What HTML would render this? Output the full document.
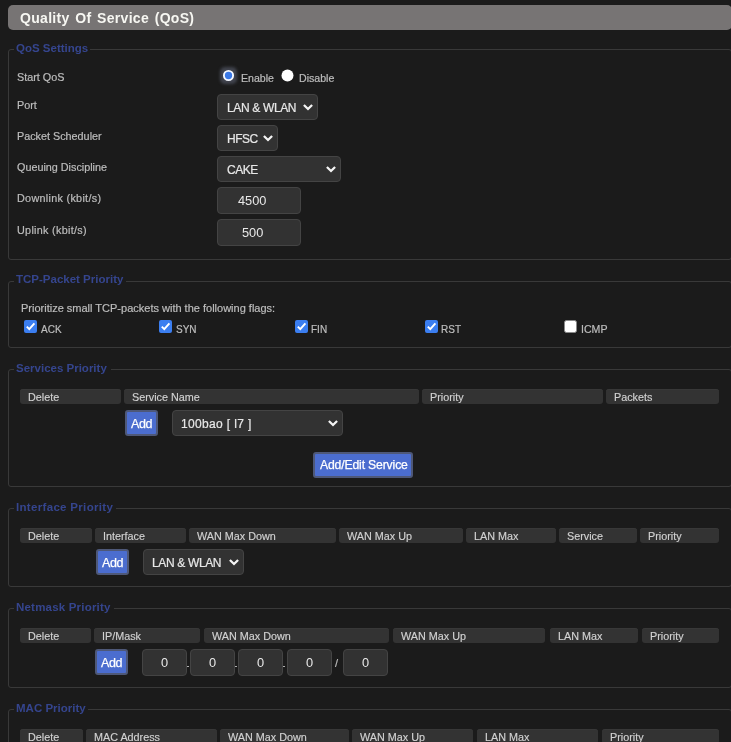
<!DOCTYPE html>
<html><head><meta charset="utf-8"><title>QoS</title>
<style>
html,body{margin:0;padding:0;}
body{background:#1b1b1b;width:731px;height:742px;overflow:hidden;position:relative;font-family:"Liberation Sans", sans-serif;}
.t{position:absolute;white-space:nowrap;will-change:transform;}
.r{position:absolute;}
</style></head><body>
<div class="r" style="left:8px;top:5px;width:724px;height:25px;background:#777474;border-radius:5px;"></div>
<div class="t" style="left:20.20px;top:11.35px;font-size:14px;line-height:14px;font-weight:bold;color:#f7f7f2;letter-spacing:0.3px;word-spacing:1.5px;">Quality Of Service (QoS)</div>
<div class="r" style="left:8px;top:49px;width:724px;height:211px;background:transparent;border:1px solid #393939;box-sizing:border-box;border-radius:3px;"></div>
<div class="r" style="left:14px;top:48px;width:76px;height:3px;background:#1b1b1b;border-radius:0px;"></div>
<div class="t" style="left:16.40px;top:43.27px;font-size:11.5px;line-height:11.5px;font-weight:bold;color:#35458e;letter-spacing:0px;">QoS Settings</div>
<div class="t" style="left:17.30px;top:71.86px;font-size:10.8px;line-height:10.8px;font-weight:normal;color:#bdbdbd;-webkit-text-stroke:0.2px #bdbdbd;">Start QoS</div>
<div class="t" style="left:17.30px;top:99.86px;font-size:10.8px;line-height:10.8px;font-weight:normal;color:#bdbdbd;-webkit-text-stroke:0.2px #bdbdbd;">Port</div>
<div class="t" style="left:17.30px;top:130.86px;font-size:10.8px;line-height:10.8px;font-weight:normal;color:#bdbdbd;-webkit-text-stroke:0.2px #bdbdbd;">Packet Scheduler</div>
<div class="t" style="left:17.30px;top:161.86px;font-size:10.8px;line-height:10.8px;font-weight:normal;color:#bdbdbd;-webkit-text-stroke:0.2px #bdbdbd;">Queuing Discipline</div>
<div class="t" style="left:17.30px;top:192.86px;font-size:10.8px;line-height:10.8px;font-weight:normal;color:#bdbdbd;letter-spacing:0.3px;-webkit-text-stroke:0.2px #bdbdbd;">Downlink (kbit/s)</div>
<div class="t" style="left:17.30px;top:224.86px;font-size:10.8px;line-height:10.8px;font-weight:normal;color:#bdbdbd;letter-spacing:0.3px;-webkit-text-stroke:0.2px #bdbdbd;">Uplink (kbit/s)</div>
<div class="r" style="left:220px;top:67px;width:17px;height:17px;border-radius:5px;background:rgba(110,118,140,0.45);filter:blur(1.5px);"></div>
<svg class="r" style="left:222px;top:69px" width="13" height="13" viewBox="0 0 13 13"><circle cx="6.5" cy="6.5" r="4.6" fill="#3a78e6" stroke="#f4f8ff" stroke-width="1.9"/></svg>
<div class="t" style="left:240.60px;top:72.83px;font-size:10.6px;line-height:10.6px;font-weight:normal;color:#bdbdbd;-webkit-text-stroke:0.2px #bdbdbd;">Enable</div>
<svg class="r" style="left:281px;top:69px" width="13" height="13" viewBox="0 0 13 13"><circle cx="6.5" cy="6.5" r="6" fill="#ffffff"/></svg>
<div class="t" style="left:299.00px;top:72.83px;font-size:10.6px;line-height:10.6px;font-weight:normal;color:#bdbdbd;-webkit-text-stroke:0.2px #bdbdbd;">Disable</div>
<div class="r" style="left:217px;top:94px;width:101px;height:26px;background:#323232;border:1px solid #444444;box-sizing:border-box;border-radius:4px;"></div>
<div class="t" style="left:226.70px;top:101.74px;font-size:12px;line-height:12px;font-weight:normal;color:#e8e8e8;letter-spacing:-0.35px;-webkit-text-stroke:0.2px #e8e8e8;">LAN &amp; WLAN</div>
<svg class="r" style="left:302px;top:103.2px" width="12" height="8" viewBox="0 0 12 8"><path d="M1.9 2 L6 6 L10.1 2" fill="none" stroke="#f4f4f4" stroke-width="2.3" stroke-linecap="butt"/></svg>
<div class="r" style="left:217px;top:125px;width:61px;height:26px;background:#323232;border:1px solid #444444;box-sizing:border-box;border-radius:4px;"></div>
<div class="t" style="left:226.70px;top:132.84px;font-size:12px;line-height:12px;font-weight:normal;color:#e8e8e8;letter-spacing:-0.5px;-webkit-text-stroke:0.2px #e8e8e8;">HFSC</div>
<svg class="r" style="left:262px;top:134.2px" width="12" height="8" viewBox="0 0 12 8"><path d="M1.9 2 L6 6 L10.1 2" fill="none" stroke="#f4f4f4" stroke-width="2.3" stroke-linecap="butt"/></svg>
<div class="r" style="left:217px;top:156px;width:124px;height:26px;background:#323232;border:1px solid #444444;box-sizing:border-box;border-radius:4px;"></div>
<div class="t" style="left:226.70px;top:163.84px;font-size:12px;line-height:12px;font-weight:normal;color:#e8e8e8;letter-spacing:-0.5px;-webkit-text-stroke:0.2px #e8e8e8;">CAKE</div>
<svg class="r" style="left:325px;top:165.2px" width="12" height="8" viewBox="0 0 12 8"><path d="M1.9 2 L6 6 L10.1 2" fill="none" stroke="#f4f4f4" stroke-width="2.3" stroke-linecap="butt"/></svg>
<div class="r" style="left:217px;top:187px;width:84px;height:27px;background:#323232;border:1px solid #444444;box-sizing:border-box;border-radius:4px;"></div>
<div class="t" style="left:238.30px;top:195.16px;font-size:12.8px;line-height:12.8px;font-weight:normal;color:#e8e8e8;">4500</div>
<div class="r" style="left:217px;top:219px;width:84px;height:27px;background:#323232;border:1px solid #444444;box-sizing:border-box;border-radius:4px;"></div>
<div class="t" style="left:241.70px;top:227.16px;font-size:12.8px;line-height:12.8px;font-weight:normal;color:#e8e8e8;">500</div>
<div class="r" style="left:8px;top:281px;width:724px;height:67px;background:transparent;border:1px solid #393939;box-sizing:border-box;border-radius:3px;"></div>
<div class="r" style="left:14px;top:280px;width:112px;height:3px;background:#1b1b1b;border-radius:0px;"></div>
<div class="t" style="left:16.40px;top:274.47px;font-size:11.5px;line-height:11.5px;font-weight:bold;color:#35458e;letter-spacing:0px;">TCP-Packet Priority</div>
<div class="t" style="left:20.50px;top:302.69px;font-size:11px;line-height:11px;font-weight:normal;color:#bdbdbd;-webkit-text-stroke:0.2px #bdbdbd;">Prioritize small TCP-packets with the following flags:</div>
<svg class="r" style="left:24px;top:320px" width="13" height="13" viewBox="0 0 13 13"><rect x="0" y="0" width="13" height="13" rx="2" fill="#3b7ef0"/><path d="M2.8 6.6 L5.3 9.2 L10.4 3.4" fill="none" stroke="#ffffff" stroke-width="1.9"/></svg>
<div class="t" style="left:41.00px;top:324.84px;font-size:10px;line-height:10px;font-weight:normal;color:#bdbdbd;-webkit-text-stroke:0.2px #bdbdbd;">ACK</div>
<svg class="r" style="left:159px;top:320px" width="13" height="13" viewBox="0 0 13 13"><rect x="0" y="0" width="13" height="13" rx="2" fill="#3b7ef0"/><path d="M2.8 6.6 L5.3 9.2 L10.4 3.4" fill="none" stroke="#ffffff" stroke-width="1.9"/></svg>
<div class="t" style="left:176.00px;top:324.84px;font-size:10px;line-height:10px;font-weight:normal;color:#bdbdbd;-webkit-text-stroke:0.2px #bdbdbd;">SYN</div>
<svg class="r" style="left:295px;top:320px" width="13" height="13" viewBox="0 0 13 13"><rect x="0" y="0" width="13" height="13" rx="2" fill="#3b7ef0"/><path d="M2.8 6.6 L5.3 9.2 L10.4 3.4" fill="none" stroke="#ffffff" stroke-width="1.9"/></svg>
<div class="t" style="left:311.40px;top:324.84px;font-size:10px;line-height:10px;font-weight:normal;color:#bdbdbd;-webkit-text-stroke:0.2px #bdbdbd;">FIN</div>
<svg class="r" style="left:425px;top:320px" width="13" height="13" viewBox="0 0 13 13"><rect x="0" y="0" width="13" height="13" rx="2" fill="#3b7ef0"/><path d="M2.8 6.6 L5.3 9.2 L10.4 3.4" fill="none" stroke="#ffffff" stroke-width="1.9"/></svg>
<div class="t" style="left:441.20px;top:324.84px;font-size:10px;line-height:10px;font-weight:normal;color:#bdbdbd;-webkit-text-stroke:0.2px #bdbdbd;">RST</div>
<svg class="r" style="left:564px;top:320px" width="13" height="13" viewBox="0 0 13 13"><rect x="0.5" y="0.5" width="12" height="12" rx="2" fill="#ffffff" stroke="#8a8a8a" stroke-width="1"/></svg>
<div class="t" style="left:580.60px;top:324.33px;font-size:10.6px;line-height:10.6px;font-weight:normal;color:#bdbdbd;-webkit-text-stroke:0.2px #bdbdbd;">ICMP</div>
<div class="r" style="left:8px;top:369px;width:724px;height:118px;background:transparent;border:1px solid #393939;box-sizing:border-box;border-radius:3px;"></div>
<div class="r" style="left:14px;top:368px;width:97px;height:3px;background:#1b1b1b;border-radius:0px;"></div>
<div class="t" style="left:16.40px;top:362.97px;font-size:11.5px;line-height:11.5px;font-weight:bold;color:#35458e;letter-spacing:0px;">Services Priority</div>
<div class="r" style="left:20px;top:389px;width:101px;height:15px;background:#333333;border-radius:3px;box-shadow: inset 0 1px 0 #383838;"></div>
<div class="t" style="left:27.50px;top:392.16px;font-size:10.8px;line-height:10.8px;font-weight:normal;color:#d2d2d2;-webkit-text-stroke:0.15px #d2d2d2;">Delete</div>
<div class="r" style="left:124px;top:389px;width:295px;height:15px;background:#333333;border-radius:3px;box-shadow: inset 0 1px 0 #383838;"></div>
<div class="t" style="left:131.50px;top:392.16px;font-size:10.8px;line-height:10.8px;font-weight:normal;color:#d2d2d2;-webkit-text-stroke:0.15px #d2d2d2;">Service Name</div>
<div class="r" style="left:422px;top:389px;width:181px;height:15px;background:#333333;border-radius:3px;box-shadow: inset 0 1px 0 #383838;"></div>
<div class="t" style="left:429.50px;top:392.16px;font-size:10.8px;line-height:10.8px;font-weight:normal;color:#d2d2d2;-webkit-text-stroke:0.15px #d2d2d2;">Priority</div>
<div class="r" style="left:606px;top:389px;width:113px;height:15px;background:#333333;border-radius:3px;box-shadow: inset 0 1px 0 #383838;"></div>
<div class="t" style="left:613.50px;top:392.16px;font-size:10.8px;line-height:10.8px;font-weight:normal;color:#d2d2d2;-webkit-text-stroke:0.15px #d2d2d2;">Packets</div>
<div class="r" style="left:125px;top:410px;width:33px;height:26px;background:#4b6dcf;border:1px solid #4e5878;box-sizing:border-box;border-radius:3px;border-width:2px;"></div>
<div class="t" style="left:131.10px;top:417.92px;font-size:12.5px;line-height:12.5px;font-weight:normal;color:#ffffff;letter-spacing:-0.4px;-webkit-text-stroke:0.25px #fff;">Add</div>
<div class="r" style="left:172px;top:410px;width:171px;height:26px;background:#323232;border:1px solid #444444;box-sizing:border-box;border-radius:4px;"></div>
<div class="t" style="left:181.00px;top:417.64px;font-size:12px;line-height:12px;font-weight:normal;color:#e8e8e8;letter-spacing:0.35px;-webkit-text-stroke:0.2px #e8e8e8;">100bao [ l7 ]</div>
<svg class="r" style="left:326.5px;top:419.2px" width="12" height="8" viewBox="0 0 12 8"><path d="M1.9 2 L6 6 L10.1 2" fill="none" stroke="#f4f4f4" stroke-width="2.3" stroke-linecap="butt"/></svg>
<div class="r" style="left:313px;top:452px;width:100px;height:26px;background:#4b6dcf;border:1px solid #4e5878;box-sizing:border-box;border-radius:3px;border-width:2px;"></div>
<div class="t" style="left:319.60px;top:459.17px;font-size:12.2px;line-height:12.2px;font-weight:normal;color:#ffffff;letter-spacing:-0.15px;-webkit-text-stroke:0.25px #fff;">Add/Edit Service</div>
<div class="r" style="left:8px;top:508px;width:724px;height:79px;background:transparent;border:1px solid #393939;box-sizing:border-box;border-radius:3px;"></div>
<div class="r" style="left:14px;top:507px;width:102px;height:3px;background:#1b1b1b;border-radius:0px;"></div>
<div class="t" style="left:16.40px;top:501.67px;font-size:11.5px;line-height:11.5px;font-weight:bold;color:#35458e;letter-spacing:0.32px;">Interface Priority</div>
<div class="r" style="left:20px;top:528px;width:72px;height:15px;background:#333333;border-radius:3px;box-shadow: inset 0 1px 0 #383838;"></div>
<div class="t" style="left:27.50px;top:531.16px;font-size:10.8px;line-height:10.8px;font-weight:normal;color:#d2d2d2;-webkit-text-stroke:0.15px #d2d2d2;">Delete</div>
<div class="r" style="left:95px;top:528px;width:91px;height:15px;background:#333333;border-radius:3px;box-shadow: inset 0 1px 0 #383838;"></div>
<div class="t" style="left:102.50px;top:531.16px;font-size:10.8px;line-height:10.8px;font-weight:normal;color:#d2d2d2;-webkit-text-stroke:0.15px #d2d2d2;">Interface</div>
<div class="r" style="left:189px;top:528px;width:147px;height:15px;background:#333333;border-radius:3px;box-shadow: inset 0 1px 0 #383838;"></div>
<div class="t" style="left:196.50px;top:531.16px;font-size:10.8px;line-height:10.8px;font-weight:normal;color:#d2d2d2;-webkit-text-stroke:0.15px #d2d2d2;">WAN Max Down</div>
<div class="r" style="left:339px;top:528px;width:124px;height:15px;background:#333333;border-radius:3px;box-shadow: inset 0 1px 0 #383838;"></div>
<div class="t" style="left:346.50px;top:531.16px;font-size:10.8px;line-height:10.8px;font-weight:normal;color:#d2d2d2;-webkit-text-stroke:0.15px #d2d2d2;">WAN Max Up</div>
<div class="r" style="left:466px;top:528px;width:90px;height:15px;background:#333333;border-radius:3px;box-shadow: inset 0 1px 0 #383838;"></div>
<div class="t" style="left:473.50px;top:531.16px;font-size:10.8px;line-height:10.8px;font-weight:normal;color:#d2d2d2;-webkit-text-stroke:0.15px #d2d2d2;">LAN Max</div>
<div class="r" style="left:559px;top:528px;width:78px;height:15px;background:#333333;border-radius:3px;box-shadow: inset 0 1px 0 #383838;"></div>
<div class="t" style="left:566.50px;top:531.16px;font-size:10.8px;line-height:10.8px;font-weight:normal;color:#d2d2d2;-webkit-text-stroke:0.15px #d2d2d2;">Service</div>
<div class="r" style="left:640px;top:528px;width:79px;height:15px;background:#333333;border-radius:3px;box-shadow: inset 0 1px 0 #383838;"></div>
<div class="t" style="left:647.50px;top:531.16px;font-size:10.8px;line-height:10.8px;font-weight:normal;color:#d2d2d2;-webkit-text-stroke:0.15px #d2d2d2;">Priority</div>
<div class="r" style="left:96px;top:549px;width:33px;height:26px;background:#4b6dcf;border:1px solid #4e5878;box-sizing:border-box;border-radius:3px;border-width:2px;"></div>
<div class="t" style="left:102.00px;top:556.72px;font-size:12.5px;line-height:12.5px;font-weight:normal;color:#ffffff;letter-spacing:-0.4px;-webkit-text-stroke:0.25px #fff;">Add</div>
<div class="r" style="left:143px;top:549px;width:101px;height:26px;background:#323232;border:1px solid #444444;box-sizing:border-box;border-radius:4px;"></div>
<div class="t" style="left:152.00px;top:556.64px;font-size:12px;line-height:12px;font-weight:normal;color:#e8e8e8;letter-spacing:-0.35px;-webkit-text-stroke:0.2px #e8e8e8;">LAN &amp; WLAN</div>
<svg class="r" style="left:228px;top:558.2px" width="12" height="8" viewBox="0 0 12 8"><path d="M1.9 2 L6 6 L10.1 2" fill="none" stroke="#f4f4f4" stroke-width="2.3" stroke-linecap="butt"/></svg>
<div class="r" style="left:8px;top:608px;width:724px;height:80px;background:transparent;border:1px solid #393939;box-sizing:border-box;border-radius:3px;"></div>
<div class="r" style="left:14px;top:607px;width:100px;height:3px;background:#1b1b1b;border-radius:0px;"></div>
<div class="t" style="left:16.40px;top:601.67px;font-size:11.5px;line-height:11.5px;font-weight:bold;color:#35458e;letter-spacing:0.2px;">Netmask Priority</div>
<div class="r" style="left:20px;top:628px;width:71px;height:15px;background:#333333;border-radius:3px;box-shadow: inset 0 1px 0 #383838;"></div>
<div class="t" style="left:27.50px;top:631.16px;font-size:10.8px;line-height:10.8px;font-weight:normal;color:#d2d2d2;-webkit-text-stroke:0.15px #d2d2d2;">Delete</div>
<div class="r" style="left:94px;top:628px;width:106px;height:15px;background:#333333;border-radius:3px;box-shadow: inset 0 1px 0 #383838;"></div>
<div class="t" style="left:101.50px;top:631.16px;font-size:10.8px;line-height:10.8px;font-weight:normal;color:#d2d2d2;-webkit-text-stroke:0.15px #d2d2d2;">IP/Mask</div>
<div class="r" style="left:204px;top:628px;width:185px;height:15px;background:#333333;border-radius:3px;box-shadow: inset 0 1px 0 #383838;"></div>
<div class="t" style="left:211.50px;top:631.16px;font-size:10.8px;line-height:10.8px;font-weight:normal;color:#d2d2d2;-webkit-text-stroke:0.15px #d2d2d2;">WAN Max Down</div>
<div class="r" style="left:393px;top:628px;width:152px;height:15px;background:#333333;border-radius:3px;box-shadow: inset 0 1px 0 #383838;"></div>
<div class="t" style="left:400.50px;top:631.16px;font-size:10.8px;line-height:10.8px;font-weight:normal;color:#d2d2d2;-webkit-text-stroke:0.15px #d2d2d2;">WAN Max Up</div>
<div class="r" style="left:550px;top:628px;width:88px;height:15px;background:#333333;border-radius:3px;box-shadow: inset 0 1px 0 #383838;"></div>
<div class="t" style="left:557.50px;top:631.16px;font-size:10.8px;line-height:10.8px;font-weight:normal;color:#d2d2d2;-webkit-text-stroke:0.15px #d2d2d2;">LAN Max</div>
<div class="r" style="left:642px;top:628px;width:77px;height:15px;background:#333333;border-radius:3px;box-shadow: inset 0 1px 0 #383838;"></div>
<div class="t" style="left:649.50px;top:631.16px;font-size:10.8px;line-height:10.8px;font-weight:normal;color:#d2d2d2;-webkit-text-stroke:0.15px #d2d2d2;">Priority</div>
<div class="r" style="left:95px;top:649px;width:33px;height:26px;background:#4b6dcf;border:1px solid #4e5878;box-sizing:border-box;border-radius:3px;border-width:2px;"></div>
<div class="t" style="left:101.00px;top:656.72px;font-size:12.5px;line-height:12.5px;font-weight:normal;color:#ffffff;letter-spacing:-0.4px;-webkit-text-stroke:0.25px #fff;">Add</div>
<div class="r" style="left:142px;top:649px;width:45px;height:27px;background:#323232;border:1px solid #444444;box-sizing:border-box;border-radius:4px;"></div>
<div class="t" style="left:161.00px;top:657.16px;font-size:12.8px;line-height:12.8px;font-weight:normal;color:#e8e8e8;">0</div>
<div class="r" style="left:190px;top:649px;width:45px;height:27px;background:#323232;border:1px solid #444444;box-sizing:border-box;border-radius:4px;"></div>
<div class="t" style="left:209.00px;top:657.16px;font-size:12.8px;line-height:12.8px;font-weight:normal;color:#e8e8e8;">0</div>
<div class="r" style="left:238px;top:649px;width:45px;height:27px;background:#323232;border:1px solid #444444;box-sizing:border-box;border-radius:4px;"></div>
<div class="t" style="left:257.00px;top:657.16px;font-size:12.8px;line-height:12.8px;font-weight:normal;color:#e8e8e8;">0</div>
<div class="r" style="left:287px;top:649px;width:45px;height:27px;background:#323232;border:1px solid #444444;box-sizing:border-box;border-radius:4px;"></div>
<div class="t" style="left:306.00px;top:657.16px;font-size:12.8px;line-height:12.8px;font-weight:normal;color:#e8e8e8;">0</div>
<div class="r" style="left:343px;top:649px;width:45px;height:27px;background:#323232;border:1px solid #444444;box-sizing:border-box;border-radius:4px;"></div>
<div class="t" style="left:362.00px;top:657.16px;font-size:12.8px;line-height:12.8px;font-weight:normal;color:#e8e8e8;">0</div>
<div class="r" style="left:187.1px;top:665.6px;width:1.6px;height:1.6px;background:#b8b8b8;border-radius:0.3px"></div>
<div class="r" style="left:235.1px;top:665.6px;width:1.6px;height:1.6px;background:#b8b8b8;border-radius:0.3px"></div>
<div class="r" style="left:283.1px;top:665.6px;width:1.6px;height:1.6px;background:#b8b8b8;border-radius:0.3px"></div>
<div class="t" style="left:334.50px;top:657.69px;font-size:11px;line-height:11px;font-weight:normal;color:#bdbdbd;-webkit-text-stroke:0.2px #bdbdbd;">/</div>
<div class="r" style="left:8px;top:709px;width:724px;height:92px;background:transparent;border:1px solid #393939;box-sizing:border-box;border-radius:3px;"></div>
<div class="r" style="left:14px;top:708px;width:74px;height:3px;background:#1b1b1b;border-radius:0px;"></div>
<div class="t" style="left:16.40px;top:703.07px;font-size:11.5px;line-height:11.5px;font-weight:bold;color:#35458e;letter-spacing:0px;">MAC Priority</div>
<div class="r" style="left:20px;top:729px;width:63px;height:15px;background:#333333;border-radius:3px;box-shadow: inset 0 1px 0 #383838;"></div>
<div class="t" style="left:27.50px;top:732.16px;font-size:10.8px;line-height:10.8px;font-weight:normal;color:#d2d2d2;-webkit-text-stroke:0.15px #d2d2d2;">Delete</div>
<div class="r" style="left:86px;top:729px;width:131px;height:15px;background:#333333;border-radius:3px;box-shadow: inset 0 1px 0 #383838;"></div>
<div class="t" style="left:93.50px;top:732.16px;font-size:10.8px;line-height:10.8px;font-weight:normal;color:#d2d2d2;-webkit-text-stroke:0.15px #d2d2d2;">MAC Address</div>
<div class="r" style="left:220px;top:729px;width:129px;height:15px;background:#333333;border-radius:3px;box-shadow: inset 0 1px 0 #383838;"></div>
<div class="t" style="left:227.50px;top:732.16px;font-size:10.8px;line-height:10.8px;font-weight:normal;color:#d2d2d2;-webkit-text-stroke:0.15px #d2d2d2;">WAN Max Down</div>
<div class="r" style="left:352px;top:729px;width:121px;height:15px;background:#333333;border-radius:3px;box-shadow: inset 0 1px 0 #383838;"></div>
<div class="t" style="left:359.50px;top:732.16px;font-size:10.8px;line-height:10.8px;font-weight:normal;color:#d2d2d2;-webkit-text-stroke:0.15px #d2d2d2;">WAN Max Up</div>
<div class="r" style="left:477px;top:729px;width:121px;height:15px;background:#333333;border-radius:3px;box-shadow: inset 0 1px 0 #383838;"></div>
<div class="t" style="left:484.50px;top:732.16px;font-size:10.8px;line-height:10.8px;font-weight:normal;color:#d2d2d2;-webkit-text-stroke:0.15px #d2d2d2;">LAN Max</div>
<div class="r" style="left:602px;top:729px;width:117px;height:15px;background:#333333;border-radius:3px;box-shadow: inset 0 1px 0 #383838;"></div>
<div class="t" style="left:609.50px;top:732.16px;font-size:10.8px;line-height:10.8px;font-weight:normal;color:#d2d2d2;-webkit-text-stroke:0.15px #d2d2d2;">Priority</div>
</body></html>
